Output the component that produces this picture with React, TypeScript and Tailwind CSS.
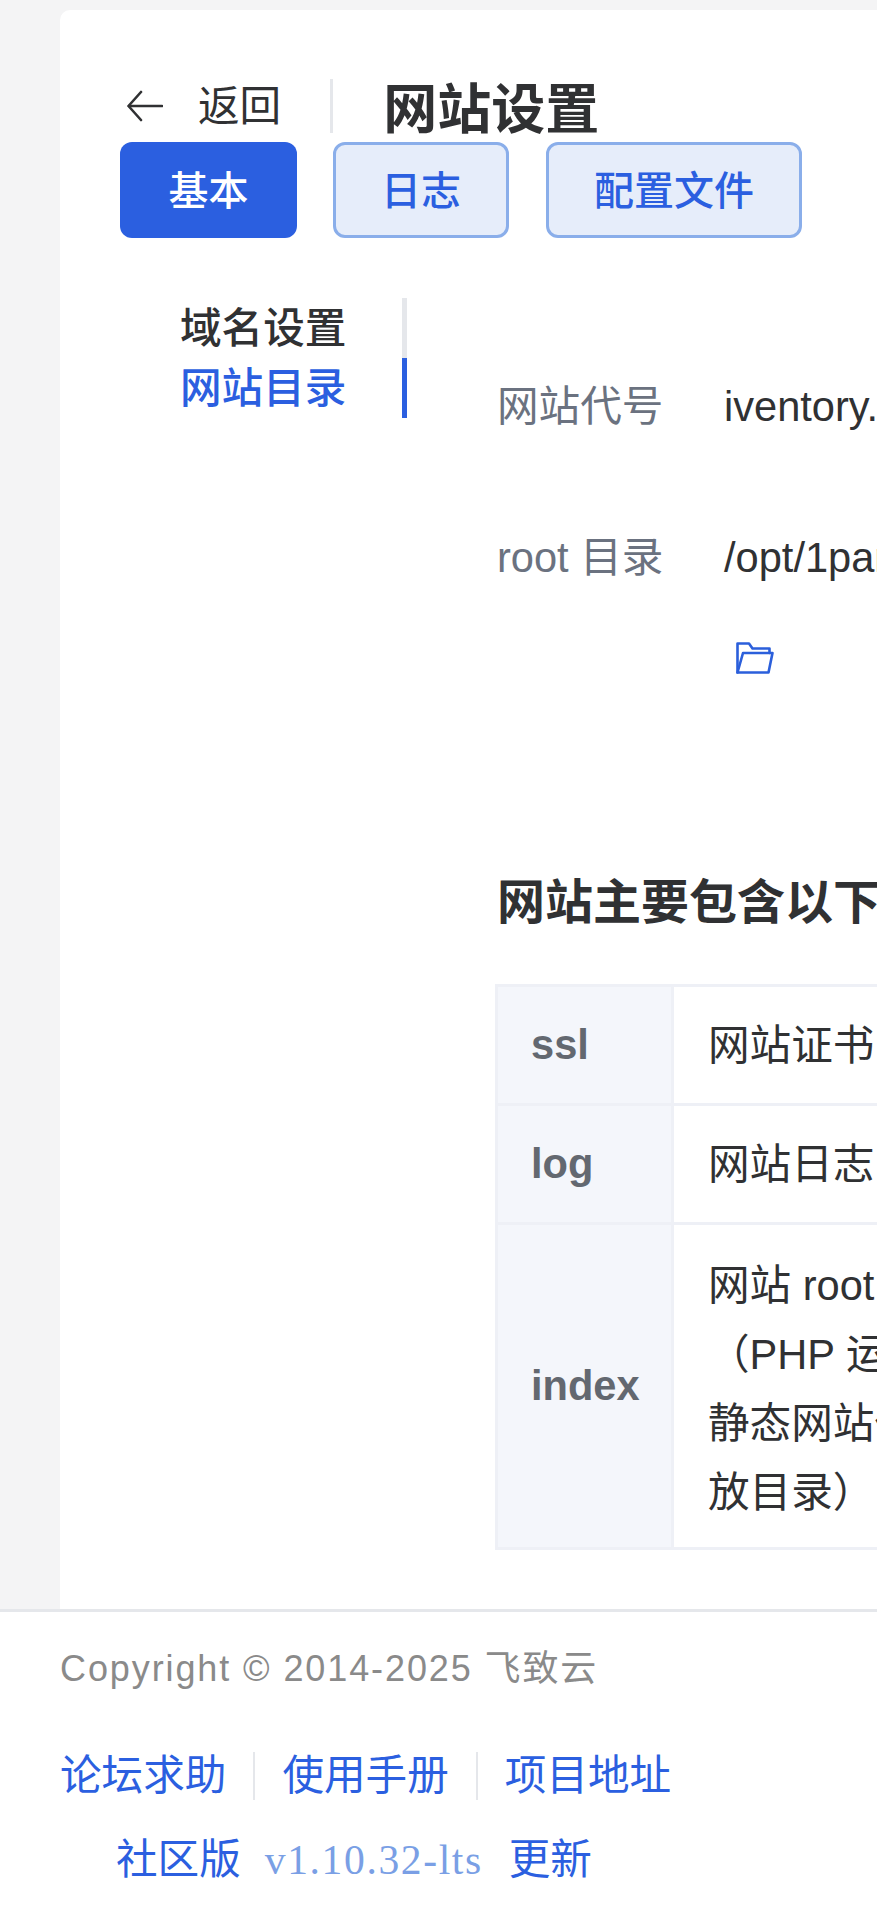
import React from "react";

const cjk = "font-['Liberation_Sans','Noto_Sans_CJK_SC',sans-serif]";

function FolderIcon() {
  return (
    <svg width="38" height="32" viewBox="0 0 38 32" fill="none" stroke="#2b5fdb" strokeWidth="2.6" strokeLinejoin="round" strokeLinecap="round">
      <path d="M1.5 30.5V1.5H13L16.5 6.5H33.5V11" />
      <path d="M1.5 30.5H32.5L36.5 11H7L1.5 30.5Z" />
    </svg>
  );
}

function BackArrow() {
  return (
    <svg width="36" height="32" viewBox="0 0 36 32" fill="none" stroke="#303133" strokeWidth="2.6" strokeLinecap="round" strokeLinejoin="round">
      <path d="M35 16H2" />
      <path d="M14 2L1.5 16L14 30" />
    </svg>
  );
}

function Row({ label, pad, children }: { label: string; pad: string; children: React.ReactNode }) {
  return (
    <tr>
      <td className="border-[3px] border-[#eef0f6] bg-[#f4f6fb] pl-[33px] font-bold text-[#636870]">{label}</td>
      <td className={`border-[3px] border-[#eef0f6] ${pad} pl-[34px] leading-[69px] whitespace-nowrap text-[#303133]`}>{children}</td>
    </tr>
  );
}

export default function App() {
  return (
    <div className={`${cjk} flex h-[1932px] w-[877px] flex-col overflow-hidden bg-[#f4f4f5] text-[41.6px]`}>
      <main className="min-h-0 flex-1 overflow-hidden pl-[60px] pt-[10px]">
        <div className="h-full rounded-tl-[10px] bg-white pl-[60px] pt-[69px]">
          <div className="flex h-[54px] items-center">
            <div className="ml-[7px] flex w-[37px] shrink-0"><BackArrow /></div>
            <span className="ml-[34px] pt-[2px] text-[#303133]">返回</span>
            <div className="ml-[49px] h-[54px] w-[3px] shrink-0 bg-[#e5e7eb]" />
            <h1 className="ml-[50px] whitespace-nowrap pt-[8px] text-[54px] font-semibold leading-[54px] text-[#303133]">网站设置</h1>
          </div>

          <div className="mt-[9px] flex gap-[37px] text-[40px] font-medium">
            <button className="h-[96px] w-[177px] rounded-[12px] bg-[#2b5fe0] pt-[2px] text-white">基本</button>
            <button className="-ml-[1px] h-[96px] rounded-[12px] border-[3px] border-[#8aaeea] bg-[#e6edfa] px-[45px] pt-[2px] text-[#2b5fe0]">日志</button>
            <button className="h-[96px] rounded-[12px] border-[3px] border-[#8aaeea] bg-[#e6edfa] px-[45px] pt-[2px] text-[#2b5fe0]">配置文件</button>
          </div>

          <div className="mt-[60px] flex">
            <nav className="w-[287px] shrink-0">
              <div className="h-[60px] border-r-[5px] border-[#e5e7eb] pl-[60px] pt-[1px] font-medium leading-[60px] text-[#303133]">域名设置</div>
              <div className="h-[60px] border-r-[5px] border-[#2b5fe0] pl-[60px] pt-[1px] font-medium leading-[60px] text-[#2b5fe0]">网站目录</div>
            </nav>

            <div className="ml-[90px] min-w-0 flex-1 pt-[79px]">
              <div className="flex h-[60px] items-center whitespace-nowrap">
                <span className="w-[227px] shrink-0 text-[#6b7280]">网站代号</span>
                <span className="text-[#303133]">iventory.</span>
              </div>
              <div className="mt-[91px] flex h-[60px] items-center whitespace-nowrap">
                <span className="w-[227px] shrink-0 text-[#6b7280]">root 目录</span>
                <span className="text-[#303133]">/opt/1panel/apps</span>
              </div>
              <div className="ml-[239px] mt-[54px] flex h-[32px]"><FolderIcon /></div>

              <h2 className="mt-[204px] whitespace-nowrap text-[48px] font-semibold leading-[50px] text-[#303133]">网站主要包含以下文件夹</h2>

              <table className="-ml-[2px] mt-[56px] w-[775px] table-fixed border-collapse">
                <colgroup>
                  <col className="w-[176px]" />
                  <col className="w-[599px]" />
                </colgroup>
                <tbody>
                  <Row label="ssl" pad="pt-[24px] pb-[23px]">网站证书</Row>
                  <Row label="log" pad="pt-[24px] pb-[23px]">网站日志</Row>
                  <Row label="index" pad="pt-[26px] pb-[20px]">
                    网站 root 目录
                    <br />
                    （PHP 运行环境
                    <br />
                    静态网站代码存
                    <br />
                    放目录）
                  </Row>
                </tbody>
              </table>
            </div>
          </div>
        </div>
      </main>

      <footer className="h-[323px] shrink-0 border-t-[3px] border-[#e5e7eb] bg-white pl-[60px] pt-[32px]">
        <div className="text-[36px] leading-[50px] tracking-[1.9px] text-[#8a8a8a]">Copyright © 2014-2025 飞致云</div>
        <div className="mt-[58px] flex h-[48px] items-center text-[#2b5fe0]">
          <span>论坛求助</span>
          <div className="mx-[27px] h-[48px] w-[2px] bg-[#e5e7eb]" />
          <span>使用手册</span>
          <div className="mx-[27px] h-[48px] w-[2px] bg-[#e5e7eb]" />
          <span>项目地址</span>
        </div>
        <div className="ml-[56px] mt-[36px] flex h-[48px] items-center whitespace-nowrap text-[#2b5fe0]">
          <span>社区版</span>
          <span className="ml-[24px] font-['Liberation_Serif',serif] tracking-[1.6px] text-[#7a9fe5]">v1.10.32-lts</span>
          <span className="ml-[26px]">更新</span>
        </div>
      </footer>
    </div>
  );
}
